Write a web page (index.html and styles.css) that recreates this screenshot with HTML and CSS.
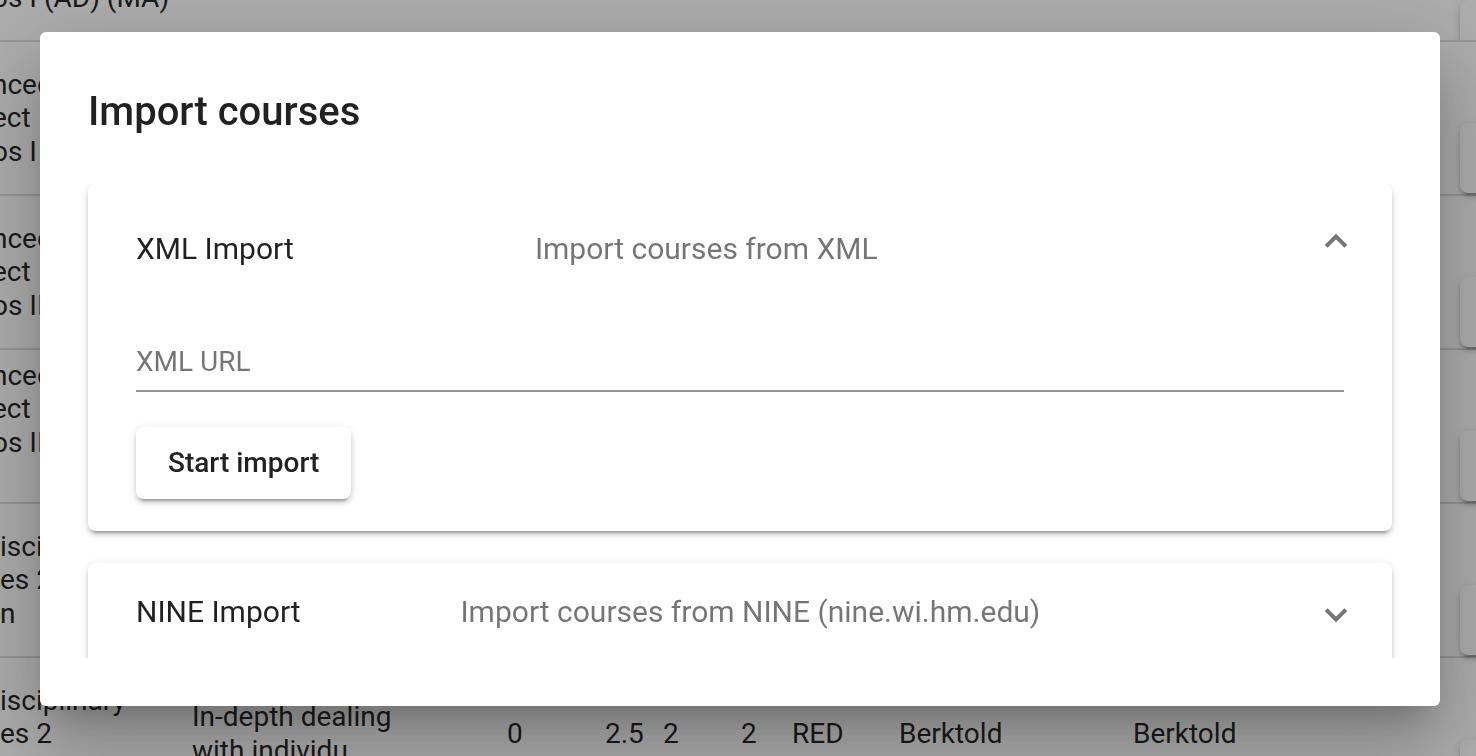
FILE: index.html
```html
<!DOCTYPE html>
<html lang="en">
<head>
<meta charset="utf-8">
<title>Import courses</title>
<link rel="stylesheet" href="styles.css">
</head>
<body>
<div class="page">
  <div class="table">
    <div class="row row-first">
      <div class="cell c1 shift"><span class="line">os I (AD) (MA)</span></div>
      <div class="cell"></div><div class="cell"></div><div class="cell"></div><div class="cell"></div>
      <div class="cell"></div><div class="cell"></div><div class="cell"></div><div class="cell"></div>
      <div class="cell act"><span class="row-btn"></span></div>
    </div>
    <div class="row">
      <div class="cell c1 shift"><span class="line">nced</span><span class="line">ect</span><span class="line">os I</span></div>
      <div class="cell"></div><div class="cell"></div><div class="cell"></div><div class="cell"></div>
      <div class="cell"></div><div class="cell"></div><div class="cell"></div><div class="cell"></div>
      <div class="cell act"><span class="row-btn"></span></div>
    </div>
    <div class="row">
      <div class="cell c1 shift"><span class="line">nced</span><span class="line">ect</span><span class="line">os II</span></div>
      <div class="cell"></div><div class="cell"></div><div class="cell"></div><div class="cell"></div>
      <div class="cell"></div><div class="cell"></div><div class="cell"></div><div class="cell"></div>
      <div class="cell act"><span class="row-btn"></span></div>
    </div>
    <div class="row">
      <div class="cell c1 shift"><span class="line">nced</span><span class="line">ect</span><span class="line">os II</span><span class="line">-</span></div>
      <div class="cell"></div><div class="cell"></div><div class="cell"></div><div class="cell"></div>
      <div class="cell"></div><div class="cell"></div><div class="cell"></div><div class="cell"></div>
      <div class="cell act"><span class="row-btn"></span></div>
    </div>
    <div class="row">
      <div class="cell c1"><span class="line">isci</span><span class="line">es 2</span><span class="line">n</span></div>
      <div class="cell"></div><div class="cell"></div><div class="cell"></div><div class="cell"></div>
      <div class="cell"></div><div class="cell"></div><div class="cell"></div><div class="cell"></div>
      <div class="cell act"><span class="row-btn"></span></div>
    </div>
    <div class="row">
      <div class="cell c1"><span class="line">isciplinary</span><span class="line">es 2</span><span class="line">n</span></div>
      <div class="cell"><span class="line">In-depth dealing</span><span class="line">with individu</span></div>
      <div class="cell">0</div>
      <div class="cell">2.5</div>
      <div class="cell">2</div>
      <div class="cell">2</div>
      <div class="cell">RED</div>
      <div class="cell">Berktold</div>
      <div class="cell">Berktold</div>
      <div class="cell act"><span class="row-btn"></span></div>
    </div>
  </div>
</div>

<div class="overlay"></div>

<div class="dialog">
  <h2 class="dialog-title">Import courses</h2>
  <div class="dialog-content">
    <section class="panel expanded">
      <header class="panel-header">
        <span class="panel-title">XML Import</span>
        <span class="panel-desc">Import courses from XML</span>
        <span class="indicator up"></span>
      </header>
      <div class="panel-body">
        <div class="field">
          <div class="field-infix">
            <span class="field-label">XML URL</span>
          </div>
          <div class="field-underline"></div>
        </div>
        <button class="raised-btn" type="button">Start import</button>
      </div>
    </section>
    <section class="panel panel-last">
      <header class="panel-header collapsed">
        <span class="panel-title">NINE Import</span>
        <span class="panel-desc">Import courses from NINE (nine.wi.hm.edu)</span>
        <span class="indicator down"></span>
      </header>
    </section>
  </div>
</div>
</body>
</html>
```

FILE: styles.css
```css
html, body {
  margin: 0;
  padding: 0;
  width: 1476px;
  height: 756px;
  overflow: hidden;
  background: #ffffff;
  font-family: Roboto, "Liberation Sans", Arial, sans-serif;
  color: rgba(0, 0, 0, 0.87);
}

.page {
  width: 1476px;
  height: 756px;
  overflow: hidden;
}

.table {
  display: flex;
  flex-direction: column;
  width: 1700px;
}

.row {
  display: grid;
  grid-template-columns: 192px 315px 98px 58px 78px 51px 107px 234px 307px 260px;
  align-items: center;
  height: 154px;
  box-sizing: border-box;
  border-bottom: 2px solid rgba(0, 0, 0, 0.12);
  font-size: 28px;
  line-height: 33.6px;
  flex: none;
}

.row-first {
  height: 42px;
  overflow: hidden;
}

.row-first .c1 {
  align-self: start;
  margin-top: -19px;
}

.cell {
  display: flex;
  flex-direction: column;
  white-space: nowrap;
}

.c1.shift {
  margin-left: -8px;
}

.line {
  display: block;
}

.act {
  align-self: end;
  padding-left: 20px;
  padding-bottom: 1px;
}

.row-btn {
  display: block;
  width: 140px;
  height: 70px;
  background: #ffffff;
  border-radius: 8px;
  box-shadow: 0 6px 2px -4px rgba(0, 0, 0, 0.2), 0 4px 4px 0 rgba(0, 0, 0, 0.14), 0 2px 10px 0 rgba(0, 0, 0, 0.12);
}

.overlay {
  position: fixed;
  inset: 0;
  background: rgba(0, 0, 0, 0.32);
}

.dialog {
  position: fixed;
  left: 40px;
  top: 32px;
  width: 1400px;
  height: 674px;
  box-sizing: border-box;
  padding: 48px;
  background: #ffffff;
  border-radius: 6px;
  display: flex;
  flex-direction: column;
  box-shadow: 0 22px 30px -14px rgba(0, 0, 0, 0.2), 0 48px 76px 6px rgba(0, 0, 0, 0.14), 0 18px 92px 16px rgba(0, 0, 0, 0.12);
}

.dialog-title {
  margin: 0 0 40px;
  font-size: 40px;
  line-height: 64px;
  font-weight: 500;
  color: rgba(0, 0, 0, 0.87);
}

.dialog-content {
  flex: 1;
  min-height: 0;
  overflow: hidden;
  margin: 0 -48px;
  padding: 0 48px;
}

.panel {
  background: #ffffff;
  border-radius: 8px;
  box-shadow: 0 6px 2px -4px rgba(0, 0, 0, 0.2), 0 4px 4px 0 rgba(0, 0, 0, 0.14), 0 2px 10px 0 rgba(0, 0, 0, 0.12);
}

.panel.expanded {
  margin-bottom: 32px;
}

.panel-last {
  padding-bottom: 16px;
}

.panel-header {
  display: flex;
  align-items: center;
  height: 128px;
  padding: 0 48px;
  font-size: 30px;
}

.panel-header.collapsed {
  height: 96px;
}

.panel-title {
  flex-grow: 1;
  margin-right: 32px;
  color: rgba(0, 0, 0, 0.87);
  white-space: nowrap;
}

.panel-desc {
  flex-grow: 2;
  margin-right: 32px;
  color: rgba(0, 0, 0, 0.54);
  white-space: nowrap;
}

.indicator {
  flex: none;
  width: 12px;
  height: 12px;
  padding: 0;
  border-style: solid;
  border-color: rgba(0, 0, 0, 0.54);
  border-width: 0 4px 4px 0;
}

.indicator.down {
  transform: rotate(45deg);
}

.indicator.up {
  transform: rotate(-135deg);
  margin-bottom: 6px;
}

.panel-body {
  padding: 0 48px 32px;
}

.field {
  padding-bottom: 35px;
}

.field-infix {
  border-top: 22px solid transparent;
  padding: 12.25px 0;
  font-size: 28px;
  line-height: 31.5px;
}

.field-label {
  display: block;
  color: rgba(0, 0, 0, 0.54);
}

.field-underline {
  height: 2px;
  background: rgba(0, 0, 0, 0.42);
}

.raised-btn {
  display: block;
  height: 72px;
  padding: 0 32px;
  min-width: 128px;
  border: 0;
  border-radius: 8px;
  background: #ffffff;
  font-family: Roboto, "Liberation Sans", Arial, sans-serif;
  font-size: 28px;
  font-weight: 500;
  line-height: 72px;
  color: rgba(0, 0, 0, 0.87);
  box-shadow: 0 6px 2px -4px rgba(0, 0, 0, 0.2), 0 4px 4px 0 rgba(0, 0, 0, 0.14), 0 2px 10px 0 rgba(0, 0, 0, 0.12);
}
```
